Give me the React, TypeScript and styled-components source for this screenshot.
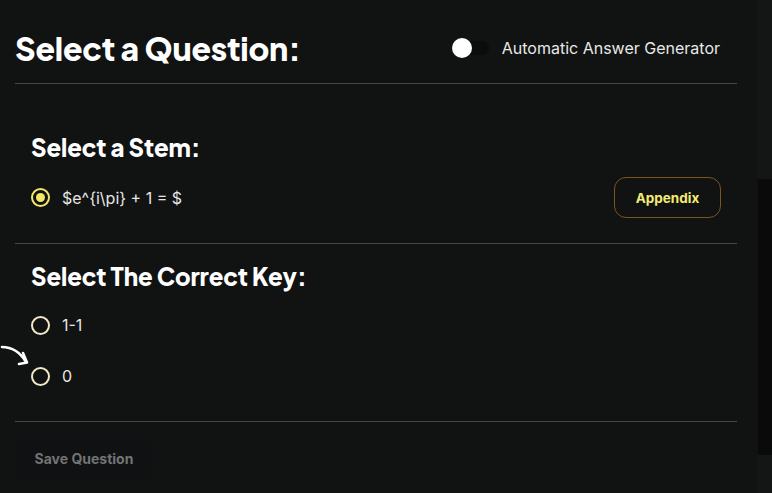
import React from "react";
import styled, { createGlobalStyle } from "styled-components";

const Global = createGlobalStyle`
  html, body { margin: 0; padding: 0; background: #111212; }
  body { font-family: Inter, "Liberation Sans", sans-serif; color: #e6e6e6; }
`;

const Page = styled.div`
  display: flex;
  height: 493px;
  background: #111212;
  overflow: hidden;
`;

const Main = styled.main`
  position: relative;
  width: 758px;
  flex: none;
  padding: 0 21px 0 15px;
  box-sizing: border-box;
`;

const SideRail = styled.aside`
  flex: 1;
  background: #141515;
  padding-top: 179px;
`;

const RailBlock = styled.div`
  height: 276px;
  background: #0a0a0a;
`;

const Header = styled.header`
  display: flex;
  align-items: center;
  justify-content: space-between;
  height: 83px;
  padding: 13px 17px 0 0;
  box-sizing: border-box;
`;

const Title = styled.h1`
  margin: 0;
  font-family: "Plus Jakarta Sans", Inter, sans-serif;
  font-weight: 800;
  font-size: 32px;
  letter-spacing: -0.2px;
  color: #ffffff;
`;

const ToggleGroup = styled.label`
  display: flex;
  align-items: center;
  gap: 13px;
  font-size: 16px;
  color: #e8e8e8;
`;

const Track = styled.span`
  position: relative;
  width: 37px;
  height: 14px;
  border-radius: 7px;
  background: #0b0c0c;
`;

const Knob = styled.span`
  position: absolute;
  left: 0;
  top: -3px;
  width: 20px;
  height: 20px;
  border-radius: 50%;
  background: #ffffff;
`;

const Divider = styled.hr`
  margin: 0;
  border: none;
  height: 1px;
  background: #444545;
`;

const Section = styled.section<{ $top: number; $bottom: number }>`
  padding: ${(p) => p.$top}px 16px ${(p) => p.$bottom}px;
`;

const SectionTitle = styled.h2`
  margin: 0;
  height: 28px;
  line-height: 28px;
  font-family: "Plus Jakarta Sans", Inter, sans-serif;
  font-weight: 800;
  font-size: 24px;
  letter-spacing: -0.1px;
  color: #ffffff;
`;

const StemRow = styled.div`
  display: flex;
  align-items: center;
  justify-content: space-between;
  margin-top: 16px;
  height: 41px;
`;

const Option = styled.div<{ $gap: number }>`
  display: flex;
  align-items: center;
  gap: 12px;
  height: 24px;
  margin-top: ${(p) => p.$gap}px;
  font-size: 16px;
  color: #e6e6e6;
`;

const Radio = styled.span<{ $checked?: boolean }>`
  box-sizing: border-box;
  width: 19px;
  height: 19px;
  border-radius: 50%;
  border: 2px solid ${(p) => (p.$checked ? "#f3e66a" : "#efe9c4")};
  display: flex;
  align-items: center;
  justify-content: center;
  &::after {
    content: "";
    display: ${(p) => (p.$checked ? "block" : "none")};
    width: 9px;
    height: 9px;
    border-radius: 50%;
    background: #f3e66a;
  }
`;

const AppendixButton = styled.button`
  width: 107px;
  height: 41px;
  border-radius: 12px;
  border: 1px solid #7d5520;
  background: transparent;
  color: #f4ec72;
  font-family: Inter, sans-serif;
  font-weight: 700;
  font-size: 13.5px;
`;

const SaveButton = styled.button`
  margin-top: 16px;
  width: 138px;
  height: 40px;
  border: none;
  border-radius: 10px;
  background: #0f1113;
  color: #737474;
  font-family: Inter, sans-serif;
  font-weight: 700;
  font-size: 14px;
  text-align: center;
`;

const Arrow = styled.svg`
  position: absolute;
  left: 0;
  top: 343px;
`;

export default function App() {
  return (
    <>
      <Global />
      <Page>
        <Main>
          <Header>
            <Title>Select a Question:</Title>
            <ToggleGroup>
              <Track>
                <Knob />
              </Track>
              Automatic Answer Generator
            </ToggleGroup>
          </Header>
          <Divider />
          <Section $top={49} $bottom={25}>
            <SectionTitle>Select a Stem:</SectionTitle>
            <StemRow>
              <Option $gap={0}>
                <Radio $checked />
                {"$e^{i\\pi} + 1 = $"}
              </Option>
              <AppendixButton>Appendix</AppendixButton>
            </StemRow>
          </Section>
          <Divider />
          <Section $top={18} $bottom={33}>
            <SectionTitle>Select The Correct Key:</SectionTitle>
            <Option $gap={23}>
              <Radio />
              1-1
            </Option>
            <Option $gap={27}>
              <Radio />0
            </Option>
          </Section>
          <Divider />
          <SaveButton>Save Question</SaveButton>
          <Arrow width="32" height="26" viewBox="0 0 32 26">
            <path
              d="M2 4 C 12 4, 20 9, 26 19"
              fill="none"
              stroke="#ffffff"
              strokeWidth="2.6"
              strokeLinecap="round"
            />
            <path
              d="M23 10 L 27 19.5 L 19 21"
              fill="none"
              stroke="#ffffff"
              strokeWidth="2.6"
              strokeLinecap="round"
              strokeLinejoin="round"
            />
          </Arrow>
        </Main>
        <SideRail>
          <RailBlock />
        </SideRail>
      </Page>
    </>
  );
}
